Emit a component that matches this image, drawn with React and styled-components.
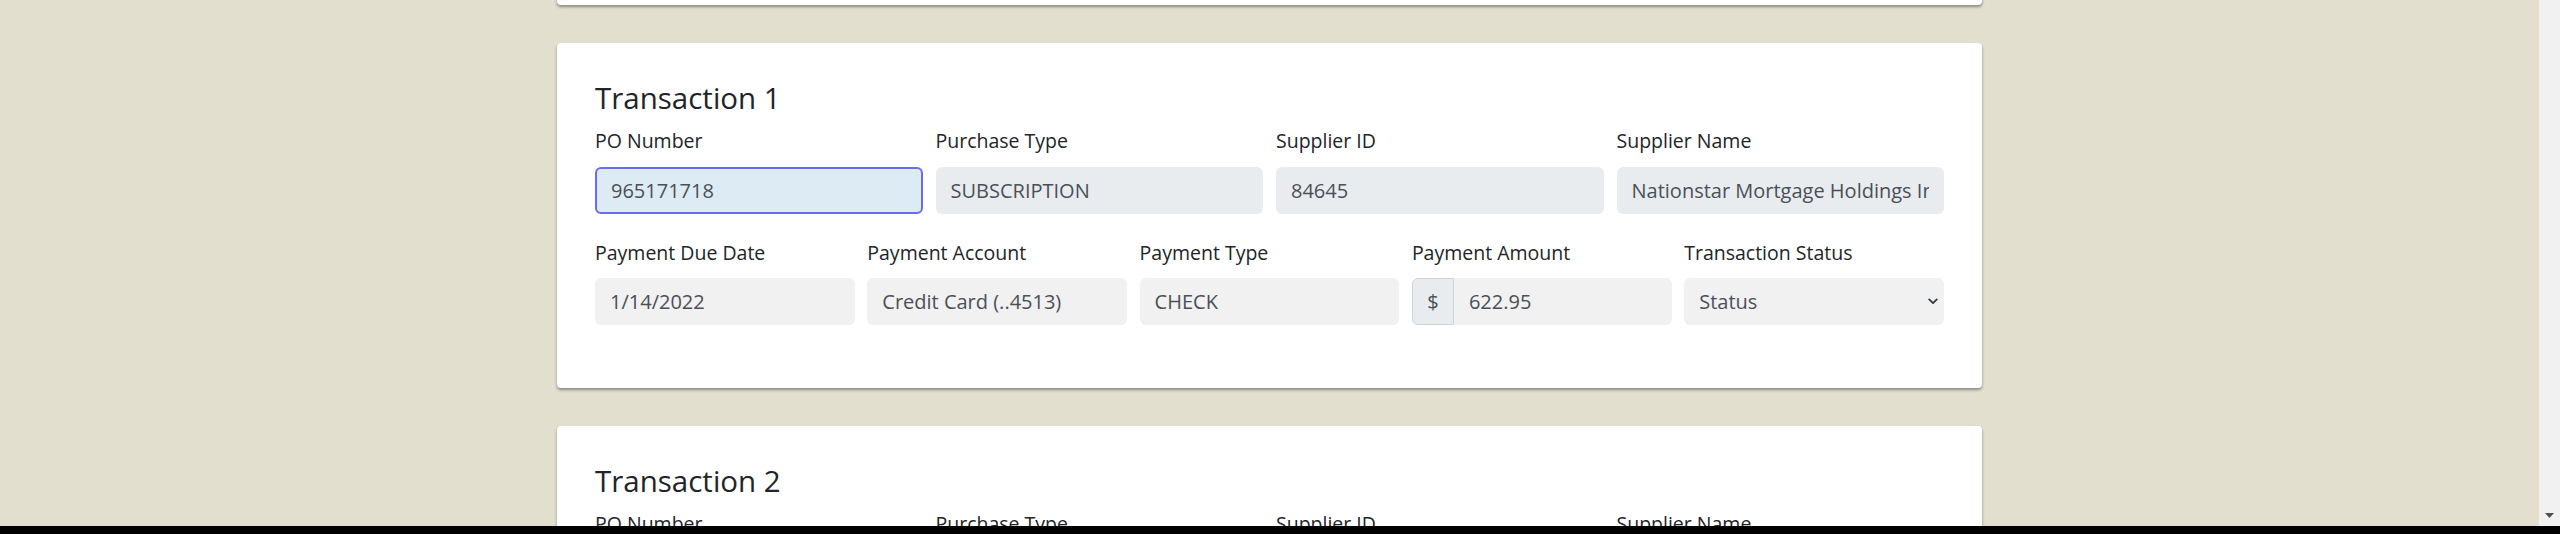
import styled, { createGlobalStyle } from "styled-components";

const transactions = [
  {
    id: 1,
    po: "965171718",
    purchaseType: "SUBSCRIPTION",
    supplierId: "84645",
    supplierName: "Nationstar Mortgage Holdings Inc.",
    dueDate: "1/14/2022",
    account: "Credit Card (..4513)",
    paymentType: "CHECK",
    amount: "622.95",
  },
  {
    id: 2,
    po: "965171722",
    purchaseType: "SERVICE",
    supplierId: "84702",
    supplierName: "Acme Office Supply Co.",
    dueDate: "1/21/2022",
    account: "Credit Card (..4513)",
    paymentType: "ACH",
    amount: "1,204.10",
  },
];

const App = () => {
  return (
    <>
      <GlobalStyle />
      <Frame>
        <Viewport>
          <Main>
            <Stack>
              <SummaryCard />
              {transactions.map((t, index) => (
                <Card key={t.id}>
                  <Title>Transaction {t.id}</Title>
                  <Row $cols={4}>
                    <Field>
                      <Label>PO Number</Label>
                      <Input $tone={index === 0 ? "focus" : "readonly"} value={t.po} readOnly />
                    </Field>
                    <Field>
                      <Label>Purchase Type</Label>
                      <Input $tone="readonly" value={t.purchaseType} readOnly />
                    </Field>
                    <Field>
                      <Label>Supplier ID</Label>
                      <Input $tone="readonly" value={t.supplierId} readOnly />
                    </Field>
                    <Field>
                      <Label>Supplier Name</Label>
                      <Input $tone="readonly" value={t.supplierName} readOnly />
                    </Field>
                  </Row>
                  <Row $cols={5} $gap={12.5}>
                    <Field>
                      <Label>Payment Due Date</Label>
                      <Input value={t.dueDate} readOnly />
                    </Field>
                    <Field>
                      <Label>Payment Account</Label>
                      <Input value={t.account} readOnly />
                    </Field>
                    <Field>
                      <Label>Payment Type</Label>
                      <Input value={t.paymentType} readOnly />
                    </Field>
                    <Field>
                      <Label>Payment Amount</Label>
                      <InputGroup>
                        <Addon>$</Addon>
                        <Input $grouped value={t.amount} readOnly />
                      </InputGroup>
                    </Field>
                    <Field>
                      <Label>Transaction Status</Label>
                      <SelectWrap>
                        <Select defaultValue="">
                          <option value="">Status</option>
                          <option value="paid">Paid</option>
                          <option value="pending">Pending</option>
                        </Select>
                        <Chevron width="10" height="7" viewBox="0 0 10 7" fill="none">
                          <path d="M1.2 1.4L5 5.2L8.8 1.4" stroke="#343a40" strokeWidth="1.8" strokeLinecap="round" strokeLinejoin="round" />
                        </Chevron>
                      </SelectWrap>
                    </Field>
                  </Row>
                </Card>
              ))}
            </Stack>
          </Main>
          <Scrollbar>
            <svg width="9" height="5" viewBox="0 0 9 5">
              <path d="M0 0H9L4.5 5Z" fill="#505050" />
            </svg>
          </Scrollbar>
        </Viewport>
        <BottomBar />
      </Frame>
    </>
  );
};

export default App;

const GlobalStyle = createGlobalStyle`
  html, body {
    margin: 0;
    padding: 0;
    background: #e2dfcf;
    font-family: "Open Sans", "Liberation Sans", sans-serif;
    color: #212529;
  }
  * {
    box-sizing: border-box;
  }
`;

const Frame = styled.div`
  height: 534px;
  display: flex;
  flex-direction: column;
  overflow: hidden;
`;

const Viewport = styled.div`
  height: 526px;
  display: flex;
`;

const Main = styled.main`
  flex: 1;
  overflow: hidden;
`;

const Stack = styled.div`
  width: 1425px;
  margin: -115px auto 0;
  display: flex;
  flex-direction: column;
  gap: 38px;
`;

const Card = styled.section`
  background: #ffffff;
  border-radius: 4px;
  box-shadow: 0 2px 3px rgba(0, 0, 0, 0.38);
  padding: 37px 38px 63px;
`;

const SummaryCard = styled(Card)`
  height: 120px;
  padding: 0;
`;

const Title = styled.h3`
  margin: 0 0 11px;
  font-size: 29.5px;
  font-weight: 400;
  line-height: 36px;
  color: #212529;
`;

const Row = styled.div`
  display: grid;
  grid-template-columns: repeat(${(p) => p.$cols}, 1fr);
  column-gap: ${(p) => p.$gap || 13}px;
  & + & {
    margin-top: 25px;
  }
`;

const Field = styled.div`
  display: flex;
  flex-direction: column;
  min-width: 0;
`;

const Label = styled.label`
  display: block;
  font-size: 19.5px;
  line-height: 28.5px;
  margin-bottom: 11px;
  color: #212529;
`;

const tones = {
  focus: "background: #ddecf4; border: 2px solid #6b6bf2; padding: 0 14px;",
  readonly: "background: #e9ecef; border: 0;",
  plain: "background: #f1f1f1; border: 0;",
};

const Input = styled.input`
  width: 100%;
  height: 47px;
  padding: 0 15px;
  border: 0;
  border-radius: ${(p) => (p.$grouped ? "0 6px 6px 0" : "6px")};
  font-family: inherit;
  font-size: 20px;
  color: #495057;
  outline: none;
  min-width: 0;
  ${(p) => tones[p.$tone || "plain"]}
`;

const InputGroup = styled.div`
  display: flex;
`;

const Addon = styled.span`
  flex: 0 0 42px;
  height: 47px;
  display: flex;
  align-items: center;
  justify-content: center;
  background: #e9ecef;
  border: 1px solid #ced4da;
  border-radius: 6px 0 0 6px;
  font-size: 20px;
  color: #495057;
`;

const SelectWrap = styled.div`
  position: relative;
`;

const Select = styled.select`
  appearance: none;
  width: 100%;
  height: 47px;
  padding: 0 40px 0 15px;
  border: 0;
  border-radius: 6px;
  background: #f1f1f1;
  font-family: inherit;
  font-size: 20px;
  color: #495057;
  outline: none;
`;

const Chevron = styled.svg`
  position: absolute;
  right: 6px;
  top: 20px;
  pointer-events: none;
`;

const Scrollbar = styled.div`
  width: 21px;
  background: #f1f1f1;
  display: flex;
  align-items: flex-end;
  justify-content: center;
  padding-bottom: 8px;
`;

const BottomBar = styled.div`
  height: 8px;
  background: #000000;
`;
